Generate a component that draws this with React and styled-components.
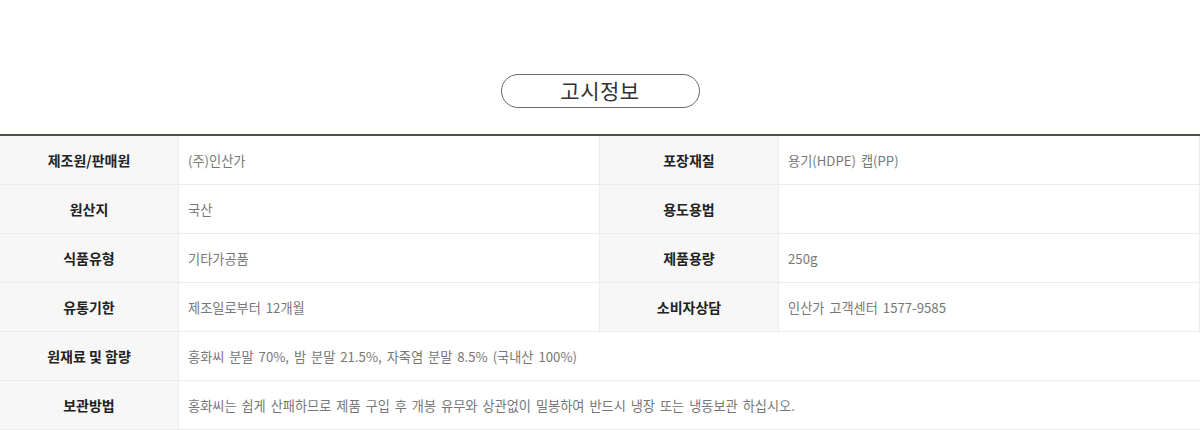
import React from "react";
import styled, { createGlobalStyle } from "styled-components";

const GlobalStyle = createGlobalStyle`
  body {
    margin: 0;
    background: #fff;
    font-family: "Noto Sans CJK KR", "Noto Sans", sans-serif;
  }
`;

const rows = [
  [
    { label: "제조원/판매원", value: "(주)인산가" },
    { label: "포장재질", value: "용기(HDPE) 캡(PP)" },
  ],
  [
    { label: "원산지", value: "국산" },
    { label: "용도용법", value: "" },
  ],
  [
    { label: "식품유형", value: "기타가공품" },
    { label: "제품용량", value: "250g" },
  ],
  [
    { label: "유통기한", value: "제조일로부터 12개월" },
    { label: "소비자상담", value: "인산가 고객센터 1577-9585" },
  ],
  [{ label: "원재료 및 함량", value: "홍화씨 분말 70%, 밤 분말 21.5%, 자죽염 분말 8.5% (국내산 100%)" }],
  [
    {
      label: "보관방법",
      value:
        "홍화씨는 쉽게 산패하므로 제품 구입 후 개봉 유무와 상관없이 밀봉하여 반드시 냉장 또는 냉동보관 하십시오.",
    },
  ],
];

const App = () => {
  return (
    <Page>
      <GlobalStyle />
      <TitleWrap>
        <Pill>고시정보</Pill>
      </TitleWrap>
      <Table>
        {rows.map((row, i) =>
          row.map((cell, j) => (
            <React.Fragment key={i + "-" + j}>
              <Label>{cell.label}</Label>
              <Value wide={row.length === 1}>{cell.value}</Value>
            </React.Fragment>
          ))
        )}
      </Table>
    </Page>
  );
};

const Page = styled.div`
  width: 1200px;
  height: 430px;
  overflow: hidden;
`;
const TitleWrap = styled.div`
  display: flex;
  justify-content: center;
  padding: 74px 0 26px;
`;
const Pill = styled.div`
  box-sizing: border-box;
  width: 199px;
  height: 34px;
  border: 1.5px solid #6a6a6a;
  border-radius: 17px;
  display: flex;
  align-items: center;
  justify-content: center;
  font-size: 21px;
  color: #333;
  letter-spacing: 0.5px;
  padding-bottom: 2px;
`;
const Table = styled.div`
  display: grid;
  grid-template-columns: 179px 421px 179px 1fr;
  border-top: 2px solid #4d5343;
`;
const Label = styled.div`
  height: 48px;
  display: flex;
  align-items: center;
  justify-content: center;
  background: #f7f7f7;
  border-bottom: 1px solid #ececec;
  border-right: 1px solid #ececec;
  font-size: 14px;
  font-weight: 700;
  color: #222;
`;
const Value = styled.div`
  height: 48px;
  display: flex;
  align-items: center;
  padding-left: 9px;
  border-bottom: 1px solid #ececec;
  border-right: ${(p) => (p.wide ? "none" : "1px solid #ececec")};
  grid-column: ${(p) => (p.wide ? "2 / 5" : "auto")};
  font-size: 13.2px;
  word-spacing: 2px;
  color: #777;
  white-space: nowrap;
`;

export default App;
